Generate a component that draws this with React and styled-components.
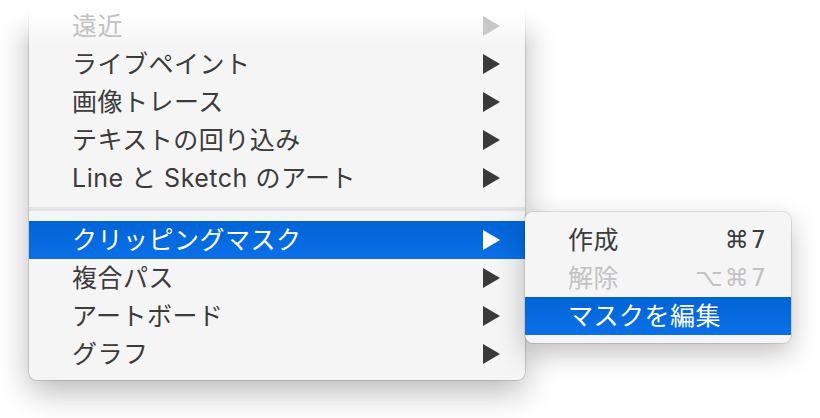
import React from 'react';
import styled, { createGlobalStyle } from 'styled-components';

const GlobalStyle = createGlobalStyle`
  html, body {
    margin: 0;
    background: #ffffff;
  }
  body {
    font-family: "Inter", "Noto Sans CJK JP", sans-serif;
    -webkit-font-smoothing: antialiased;
  }
`;

const Stage = styled.div`
  width: 820px;
  height: 418px;
  overflow: hidden;
  padding-left: 29px;
  box-sizing: border-box;
`;

const Menu = styled.div`
  position: relative;
  width: 496px;
  background: #f5f5f5;
  padding: 7px 0;
  border-radius: 0 0 8px 8px;
  box-shadow: 0 0 0 1px rgba(0, 0, 0, 0.12), 0 12px 32px rgba(0, 0, 0, 0.28);
  font-size: 25px;
  letter-spacing: 0.5px;
  color: #3b3b3b;
`;

const TopFade = styled.div`
  position: absolute;
  left: -30px;
  right: -30px;
  top: 0;
  height: 46px;
  background: linear-gradient(#ffffff 0%, rgba(255, 255, 255, 0.9) 30%, rgba(255, 255, 255, 0) 100%);
  pointer-events: none;
`;

const Row = styled.div`
  position: relative;
  height: 38px;
  display: flex;
  align-items: center;
  justify-content: space-between;
  padding: 0 25px 0 43px;
  color: ${p => (p.$active ? '#ffffff' : p.$disabled ? '#c2c2c2' : '#3b3b3b')};
  background: ${p => (p.$active ? 'linear-gradient(#0064d6, #0b70e8)' : 'transparent')};
  white-space: nowrap;
`;

const Label = styled.span`
  line-height: 38px;
`;

const Separator = styled.div`
  height: 24px;
  display: flex;
  align-items: center;
  &::after {
    content: '';
    flex: 1;
    height: 4px;
    background: #e3e3e3;
  }
`;

const Submenu = styled.div`
  position: absolute;
  left: 496px;
  top: -9px;
  width: 266px;
  padding: 9px 0 8px;
  background: #f5f5f5;
  border-radius: 8px;
  overflow: hidden;
  box-shadow: 0 0 0 1px rgba(0, 0, 0, 0.1), 0 10px 28px rgba(0, 0, 0, 0.25);
  z-index: 2;
`;

const SubRow = styled(Row)`
  padding: 0 23px 0 43px;
`;

const Shortcut = styled.span`
  font-family: "DejaVu Sans", "Inter", sans-serif;
  font-size: 24px;
  letter-spacing: 2px;
  color: ${p => (p.$disabled ? '#c2c2c2' : '#3b3b3b')};
`;

const Arrow = ({ color }) => (
  <svg width="17" height="20" viewBox="0 0 17 20">
    <polygon points="0,0 17,10 0,20" fill={color} />
  </svg>
);

const items = [
  { label: '遠近', disabled: true },
  { label: 'ライブペイント' },
  { label: '画像トレース' },
  { label: 'テキストの回り込み' },
  { label: 'Line と Sketch のアート' },
  { sep: true },
  { label: 'クリッピングマスク', active: true, sub: true },
  { label: '複合パス' },
  { label: 'アートボード' },
  { label: 'グラフ' },
];

const subItems = [
  { label: '作成', key: '⌘7' },
  { label: '解除', key: '⌥⌘7', disabled: true },
  { label: 'マスクを編集', active: true },
];

export default function App() {
  return (
    <>
      <GlobalStyle />
      <Stage>
        <Menu>
          <TopFade />
          {items.map((it, i) =>
            it.sep ? (
              <Separator key={i} />
            ) : (
              <Row key={i} $active={it.active} $disabled={it.disabled}>
                <Label>{it.label}</Label>
                <Arrow color={it.active ? '#ffffff' : it.disabled ? '#c8c8c8' : '#3a3a3a'} />
                {it.sub && (
                  <Submenu>
                    {subItems.map((s, j) => (
                      <SubRow key={j} $active={s.active} $disabled={s.disabled}>
                        <Label>{s.label}</Label>
                        {s.key && <Shortcut $disabled={s.disabled}>{s.key}</Shortcut>}
                      </SubRow>
                    ))}
                  </Submenu>
                )}
              </Row>
            )
          )}
        </Menu>
      </Stage>
    </>
  );
}
